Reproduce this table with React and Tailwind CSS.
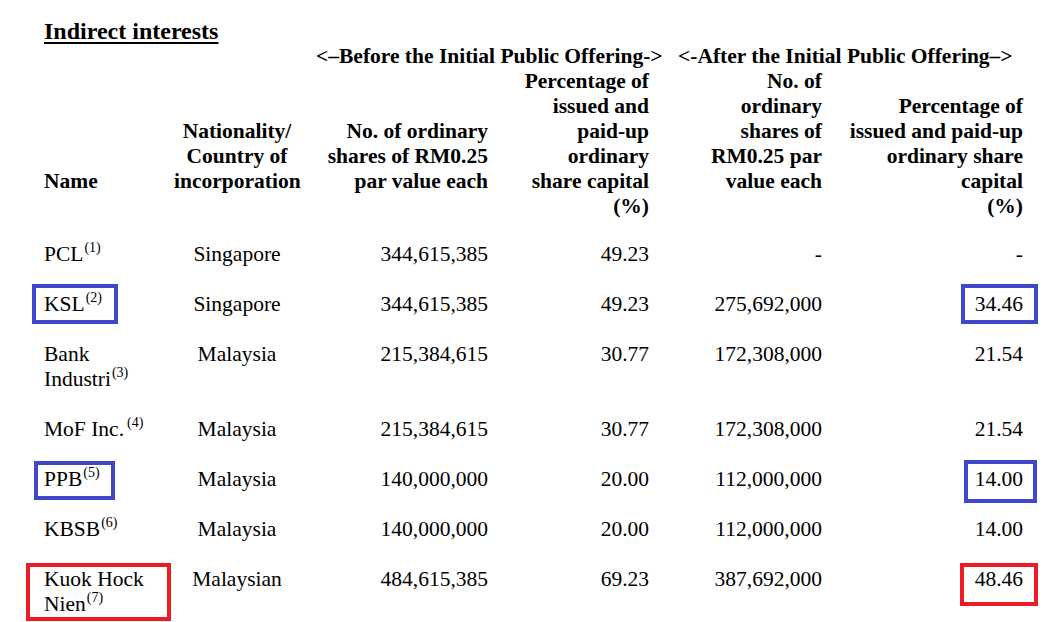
import React from 'react';

const cols = 'grid grid-cols-[130px_126px_188px_161px_173px_201px]';

const rows = [
  { id: 'pcl', name: ['PCL'], note: '1', country: 'Singapore', before: '344,615,385', beforePct: '49.23', after: '-', afterPct: '-' },
  {
    id: 'ksl', name: ['KSL'], note: '2', country: 'Singapore', before: '344,615,385', beforePct: '49.23', after: '275,692,000', afterPct: '34.46',
    nameBox: 'border-[#3f48cc] -left-[12px] -top-[7.5px] w-[86px] h-[40px]',
    pctBox: 'border-[#3f48cc] -right-[14.5px] -top-[7.5px] w-[77px] h-[40px]',
  },
  { id: 'bank', name: ['Bank', 'Industri'], note: '3', country: 'Malaysia', before: '215,384,615', beforePct: '30.77', after: '172,308,000', afterPct: '21.54' },
  { id: 'mof', name: ['MoF Inc.'], note: '4', gap: true, country: 'Malaysia', before: '215,384,615', beforePct: '30.77', after: '172,308,000', afterPct: '21.54' },
  {
    id: 'ppb', name: ['PPB'], note: '5', country: 'Malaysia', before: '140,000,000', beforePct: '20.00', after: '112,000,000', afterPct: '14.00',
    nameBox: 'border-[#3f48cc] -left-[10px] -top-[6px] w-[81px] h-[39px]',
    pctBox: 'border-[#3f48cc] -right-[13.5px] -top-[6.5px] w-[73px] h-[43px]',
  },
  { id: 'kbsb', name: ['KBSB'], note: '6', country: 'Malaysia', before: '140,000,000', beforePct: '20.00', after: '112,000,000', afterPct: '14.00' },
  {
    id: 'kuok', name: ['Kuok Hock', 'Nien'], note: '7', country: 'Malaysian', before: '484,615,385', beforePct: '69.23', after: '387,692,000', afterPct: '48.46',
    nameBox: 'border-[#ed1c24] -left-[18px] -top-[3.5px] w-[145px] h-[58px]',
    pctBox: 'border-[#ed1c24] -right-[14.5px] -top-[3.5px] w-[78px] h-[43px]',
  },
];

function Note({ n, gap }) {
  return <sup className={`text-[14px] -top-[9px] ${gap ? 'ml-[3px]' : 'ml-px'}`}>({n})</sup>;
}

function App() {
  return (
    <div className="min-h-screen bg-white text-black font-['Liberation_Serif',serif] text-[21.5px] leading-[25px] pt-[19px] pl-[44px] overflow-hidden">
      <div className="font-bold text-[24px] underline decoration-2 underline-offset-[3px]">Indirect interests</div>

      {/* offering headings */}
      <div className={`${cols} font-bold whitespace-nowrap`}>
        <div className="col-start-3 col-span-2 pl-[16px]">{'<\u2013Before the Initial Public Offering->'}</div>
        <div className="col-span-2 pl-[29px]">{'<-After the Initial Public Offering\u2013>'}</div>
      </div>

      {/* column headings */}
      <div className={`${cols} font-bold items-start h-[150px]`}>
        <div className="pt-[100px]">Name</div>
        <div className="pt-[50px] text-center">Nationality/<br />Country of<br />incorporation</div>
        <div className="pt-[50px] text-right">No. of ordinary<br />shares of RM0.25<br />par value each</div>
        <div className="text-right">Percentage of<br />issued and<br />paid-up<br />ordinary<br />share capital<br />(%)</div>
        <div className="text-right">No. of<br />ordinary<br />shares of<br />RM0.25 par<br />value each</div>
        <div className="pt-[25px] text-right">Percentage of<br />issued and paid-up<br />ordinary share<br />capital<br />(%)</div>
      </div>

      <div className="mt-[22.5px]">
        {rows.map((r) => (
          <div key={r.id} className={`${cols} pb-[25px]`}>
            <div className="relative">
              {r.name.map((line, i) => (
                <div key={i}>
                  {line}
                  {i === r.name.length - 1 && <Note n={r.note} gap={r.gap} />}
                </div>
              ))}
              {r.nameBox && <span className={`absolute border-4 ${r.nameBox}`}></span>}
            </div>
            <div className="text-center">{r.country}</div>
            <div className="text-right">{r.before}</div>
            <div className="text-right">{r.beforePct}</div>
            <div className="text-right">{r.after}</div>
            <div className="relative text-right">
              {r.afterPct}
              {r.pctBox && <span className={`absolute border-4 ${r.pctBox}`}></span>}
            </div>
          </div>
        ))}
      </div>
    </div>
  );
}

export default App;
